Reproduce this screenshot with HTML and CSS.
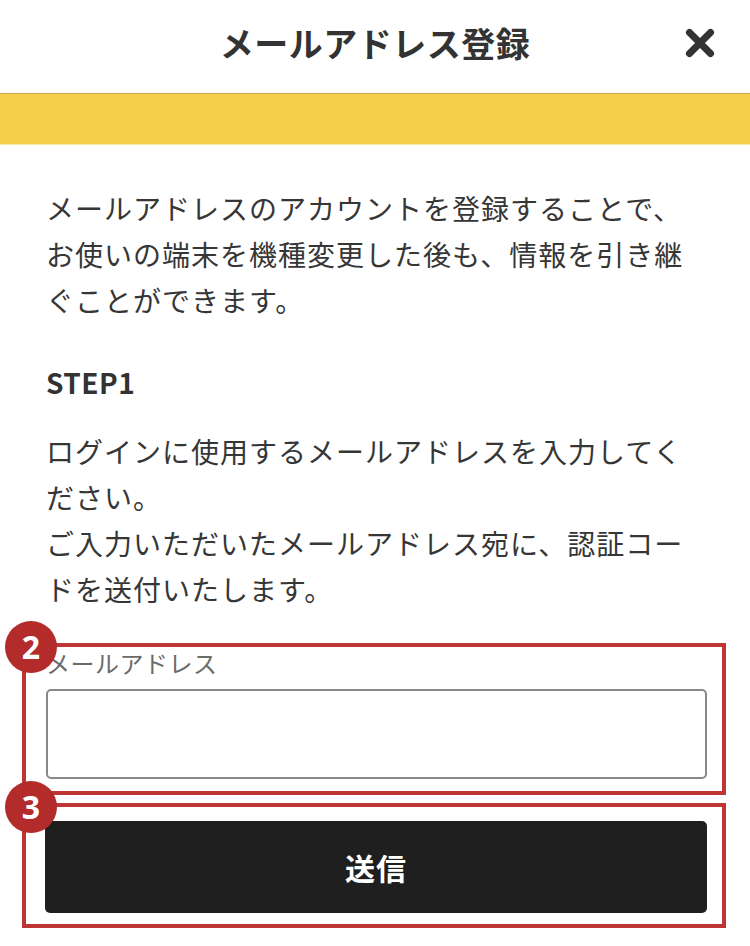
FILE: index.html
```html
<!DOCTYPE html>
<html lang="ja">
<head>
<meta charset="utf-8">
<link rel="stylesheet" href="styles.css">
</head>
<body>
<header class="header">
  <span class="spacer"></span>
  <h1 class="title">メールアドレス登録</h1>
  <button class="close" aria-label="閉じる">
    <svg viewBox="0 0 30 30" width="30" height="30"><path d="M4.5 4.5 L25.5 25.5 M25.5 4.5 L4.5 25.5" stroke="#333" stroke-width="7" stroke-linecap="round" fill="none"/></svg>
  </button>
</header>
<div class="band"></div>
<main class="content">
  <p class="text intro">メールアドレスのアカウントを登録することで、お使いの端末を機種変更した後も、情報を引き継ぐことができます。</p>
  <h2 class="step">STEP1</h2>
  <p class="text">ログインに使用するメールアドレスを入力してください。<br>ご入力いただいたメールアドレス宛に、認証コードを送付いたします。</p>
  <div class="form">
    <div class="annot annot-field">
      <span class="badge">2</span>
      <label class="label">メールアドレス</label>
      <div class="input"></div>
    </div>
    <div class="annot annot-btn">
      <span class="badge">3</span>
      <button class="submit">送信</button>
    </div>
  </div>
</main>
</body>
</html>
```
FILE: styles.css
```css
* { box-sizing: border-box; }
html, body { margin: 0; padding: 0; background: #fff; }
body {
  font-family: "Noto Sans CJK JP", "Noto Sans", sans-serif;
  color: #333;
  width: 750px;
}
.header {
  height: 94px;
  display: grid;
  grid-template-columns: 1fr auto 1fr;
  align-items: center;
  border-bottom: 1px solid #c9a744;
  padding-bottom: 8px;
}
.title {
  margin: 0;
  font-size: 34px;
  font-weight: 700;
  letter-spacing: 0.5px;
  color: #333;
  line-height: 1;
}
.close {
  justify-self: end;
  margin-right: 35px;
  background: none;
  border: 0;
  padding: 0;
  width: 30px;
  height: 30px;
  display: flex;
}
.band {
  height: 51px;
  background: #f4d04a;
  border-bottom: 1px solid #f9e9a6;
}
.content {
  padding: 40px 0 0;
}
.text {
  margin: 0 46px;
  font-size: 28px;
  letter-spacing: 1px;
  line-height: 46px;
  color: #363636;
}
.step {
  margin: 39px 46px 26px;
  font-size: 28px;
  font-weight: 700;
  letter-spacing: 0.5px;
  line-height: 40px;
  color: #333;
}
.form {
  margin-top: 31px;
  padding: 0 24px 0 22px;
  display: flex;
  flex-direction: column;
  gap: 8px;
}
.annot {
  position: relative;
  border: 4px solid #be3535;
}
.annot-field { padding: 1px 15px 12px 20px; }
.annot-btn { padding: 14px 15px 11px 19px; }
.badge {
  position: absolute;
  left: -21px;
  top: -26px;
  width: 52px;
  height: 52px;
  border-radius: 50%;
  background: #b42b2b;
  color: #fff;
  font-family: "Noto Sans", sans-serif;
  font-weight: 700;
  font-size: 32px;
  line-height: 52px;
  text-align: center;
}
.label {
  display: block;
  font-size: 24px;
  line-height: 30px;
  letter-spacing: 0.5px;
  color: #6b6b6b;
  margin-bottom: 11px;
}
.input {
  height: 90px;
  border: 2px solid #888;
  border-radius: 5px;
  background: #fff;
}
.submit {
  display: block;
  width: 100%;
  height: 92px;
  border: 0;
  border-radius: 5px;
  background: #1f1f1f;
  color: #fff;
  font-family: "Noto Sans CJK JP", sans-serif;
  font-size: 30px;
  font-weight: 700;
  letter-spacing: 1px;
}
```
